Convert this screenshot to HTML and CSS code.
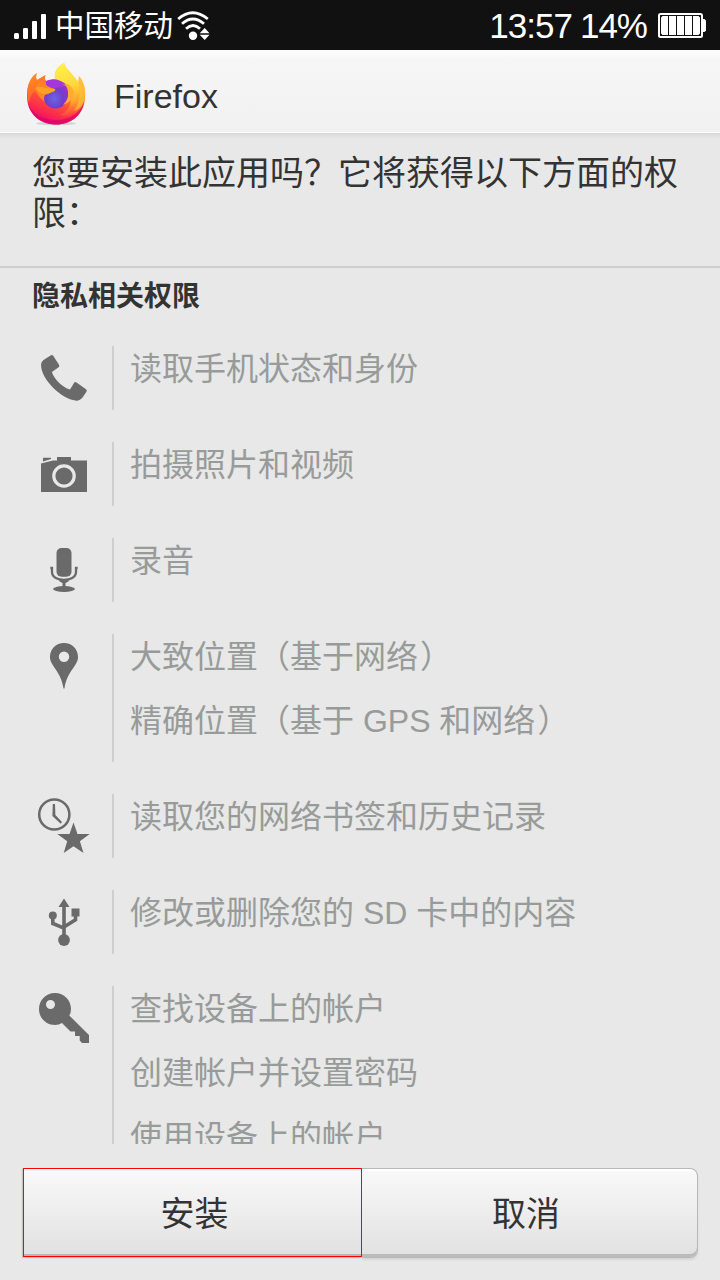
FILE: index.html
```html
<!DOCTYPE html>
<html lang="zh-CN">
<head>
<meta charset="utf-8">
<title>Firefox</title>
<link rel="stylesheet" href="styles.css">
</head>
<body>
<div class="screen">
  <header class="status">
    <svg class="signal" width="34" height="26" viewBox="0 0 34 26" fill="#fff"><rect x="0" y="19" width="5" height="6" rx="1.5"/><rect x="9" y="14" width="5" height="11" rx="1.3"/><rect x="18" y="7" width="5" height="18" rx="1"/><rect x="27" y="0" width="5" height="25" rx="1"/></svg>
    <span class="carrier">中国移动</span>
    <svg class="wifi" width="34" height="30" viewBox="0 0 34 30"><g fill="none" stroke="#fff" stroke-width="2.8"><path d="M1.200 8Q15.500-4.500 30.800 8"/><path d="M5 12.800Q15.800 3.200 27 12.800"/><path d="M9 17.700Q16 11.200 23 17.700"/></g><circle cx="16" cy="24.700" r="4.200" fill="#fff"/><path d="M22.700 22.200 27.700 17l4.800 5.200zM22.700 23.800h9.800L27.700 29z" fill="#fff"/></svg>
    <span class="clock">13:57</span>
    <span class="percent">14%</span>
    <svg class="battery" width="48" height="26" viewBox="0 0 48 26"><rect x="1" y="1" width="43" height="23" rx="1.5" fill="#111" stroke="#fff" stroke-width="2"/><path d="M45 6h1.500l1.500 1.500v10L46.500 19H45z" fill="#fff"/><path d="M4.500 3H10v19H4.500L3 20.500v-16zM11 3h7v19h-7zM19 3h7v19h-7zM27 3h7v19h-7zM35 3h5.500L42 4.500v16L40.500 22H35z" fill="#fff"/></svg>
  </header>

  <div class="titlebar">
    <svg class="logo" width="62" height="64" viewBox="0 0 62 64">
      <defs>
        <linearGradient id="body" x1=".75" y1=".05" x2=".35" y2="1"><stop offset="0" stop-color="#ffdc3c"/><stop offset=".35" stop-color="#ffa02a"/><stop offset=".62" stop-color="#ff5038"/><stop offset=".85" stop-color="#fa2450"/><stop offset="1" stop-color="#e00b70"/></linearGradient>
        <linearGradient id="flame" x1=".4" y1="0" x2=".6" y2="1"><stop offset="0" stop-color="#fff04a"/><stop offset=".45" stop-color="#ffd83c"/><stop offset=".75" stop-color="#ffa32e"/><stop offset="1" stop-color="#ff6a35" stop-opacity="0"/></linearGradient>
        <linearGradient id="ear" x1="0" y1="0" x2=".4" y2="1"><stop offset="0" stop-color="#ff951e"/><stop offset="1" stop-color="#ff5a30"/></linearGradient>
        <radialGradient id="globe" cx=".45" cy=".65" r=".65"><stop offset="0" stop-color="#6668e4"/><stop offset=".55" stop-color="#743cc8"/><stop offset="1" stop-color="#a02fdc"/></radialGradient>
      </defs>
      <ellipse cx="30" cy="60.500" rx="20" ry="1.800" fill="#000" opacity=".12"/>
      <path d="M11 10C10 12 9.500 15 11 17L19.500 12C18.500 15 18.500 17 20 18Q25 17 29 16C28 8 32 3 38 0C40 6 45 9 48 14L53 20L53 13C58 19 60 27 59 35C58 51 46 61.500 30 61.500C13 61.500 1 50 1 33C1 23 4 15 11 10Z" fill="url(#body)"/>
      <path d="M1.500 38C5 51 17 57 30 57C44 57 55 49 58.500 38C56 53 45 61.500 30 61.500C15 61.500 4 52 1.500 38Z" fill="#e0006e" opacity=".75"/>
      <path d="M29 17C28 8 32 3 38 0C40 7 45 10 49 15C57 23 58 31 57 40C54 51 46 55 34 52C45 48 48 37 41 23Q37 18 29 17Z" fill="url(#flame)"/>
      <path d="M52 18 53 13C59 20 60 29 58 38C55 45 51 47 48 48C55 37 55 27 52 18Z" fill="#ffc139" opacity=".7"/>
      <path d="M11 10C10 12 9.500 15 11 17L19.500 12C18.500 15 19 17 21 19Q16 24 18 32L9 28Q4 32 3 40Q0 31 2 23C4 17 6 13 11 10Z" fill="url(#ear)"/>
      <ellipse cx="29.500" cy="31.500" rx="12.800" ry="14" fill="url(#globe)"/>
      <path d="M20 18Q30 13 41 22L36 24Q33 24 31 25L20 26Z" fill="#a537d9"/>
      <path d="M36 22Q43 21 42 30Q43 36 37 42Q46 39 48 31Q48 24 41 21Z" fill="#ffac32"/>
      <path d="M17 18Q20 24 29 26Q30 28 26 29Q23 31 19 32Q17 36 19 39Q12 34 9 26Q11 19 17 18Z" fill="#ff8428"/>
      <path d="M9 25Q14 23 20 25L29 26Q30 28 26 29Q22 31 17 31Q12 29 9 25Z" fill="#ffa125"/>
    </svg>
    <h1 class="app-name">Firefox</h1>
  </div>

  <p class="question">您要安装此应用吗？它将获得以下方面的权限：</p>

  <main class="permissions">
    <h2 class="section-title">隐私相关权限</h2>
    <div class="group">
      <svg class="icon" width="64" height="64" viewBox="0 0 64 64"><path d="M18.500 9.400Q20.200 8.300 21.200 9.700L27 18.700Q28 20.200 26.600 21.300L19.900 26C22 33 30 41 38 43.600L42 37Q43 35.500 44.500 36.500L54 43.200Q55.500 44.400 54.300 46L50.500 51.500Q48 55 43.500 54.600C30 53 9 34 9 18.500Q9 16 11.500 14Z"/></svg>
      <ul class="lines"><li>读取手机状态和身份</li></ul>
    </div>
    <div class="group">
      <svg class="icon" width="64" height="64" viewBox="0 0 64 64"><path d="M11 15.700h8V17l-8 2.500zM25 15h14v3.500h16V50H9V21.500l12-3h4z"/><circle cx="32" cy="34" r="10.200" fill="#6a6a6a" stroke="#e8e8e8" stroke-width="3.200"/></svg>
      <ul class="lines"><li>拍摄照片和视频</li></ul>
    </div>
    <div class="group">
      <svg class="icon" width="64" height="64" viewBox="0 0 64 64"><rect x="24.500" y="10" width="15" height="28.700" rx="5"/><path d="M18.300 30H20v4C20 44.500 44 44.500 44 34v-4h1.700" fill="none" stroke="#6a6a6a" stroke-width="2.300"/><path d="M27.500 42h9v1.500l-3 1.500v5h-3v-5l-3-1.500z"/><ellipse cx="32" cy="51" rx="11" ry="2.900"/></svg>
      <ul class="lines"><li>录音</li></ul>
    </div>
    <div class="group">
      <svg class="icon" width="64" height="64" viewBox="0 0 64 64"><path fill-rule="evenodd" d="M32 9C24 9 18 15 18 23C18 32 29 37 31.500 54.500H32.500C35 37 46 32 46 23C46 15 40 9 32 9ZM32 17.500A5.200 5.200 0 1 1 32 27.900A5.200 5.200 0 1 1 32 17.500Z"/></svg>
      <ul class="lines"><li>大致位置（基于网络<span class="paren">）</span></li><li>精确位置（基于 GPS 和网络<span class="paren">）</span></li></ul>
    </div>
    <div class="group">
      <svg class="icon" width="64" height="64" viewBox="0 0 64 64"><circle cx="22.300" cy="20.500" r="15.100" fill="none" stroke="#6a6a6a" stroke-width="2.500"/><path d="m20.800 10-.4 12 8.300 7.700 1.300-1.600-6.600-7L23 10z"/><path d="m41.500 28.500 4 11.500h12.200l-9.800 7.300L51.500 59l-10-6.800L31.700 59l3.500-11.700-9.900-7.300h12.200z"/></svg>
      <ul class="lines"><li>读取您的网络书签和历史记录</li></ul>
    </div>
    <div class="group">
      <svg class="icon" width="64" height="64" viewBox="0 0 64 64"><path d="m32 8.500 5.500 8.500h-11z"/><path d="M32 14v36M20.800 26v7.500L32 38.200M43.500 22v7.800L32 37" fill="none" stroke="#6a6a6a" stroke-width="3.600"/><circle cx="20.800" cy="25.500" r="4"/><path d="M39.500 18.500h8v8h-8z"/><circle cx="32" cy="50" r="5.900"/></svg>
      <ul class="lines"><li>修改或删除您的 SD 卡中的内容</li></ul>
    </div>
    <div class="group">
      <svg class="icon" width="64" height="64" viewBox="0 0 64 64"><path fill-rule="evenodd" d="M23 7C14 7 7 14 7 23C7 33 15 39 23 39Q27 39 30 37L38.500 45.500H43V50H47.700V54.500L50 57H57V49L37.300 29.500Q39 27 39 23C39 14 32 7 23 7ZM18.500 14A4.500 4.500 0 1 1 18.500 23A4.500 4.500 0 1 1 18.500 14Z"/></svg>
      <ul class="lines"><li>查找设备上的帐户</li><li>创建帐户并设置密码</li><li>使用设备上的帐户</li></ul>
    </div>
  </main>

  <footer class="actions">
    <button class="button install">安装</button>
    <button class="button cancel">取消</button>
  </footer>
</div>
</body>
</html>
```

FILE: styles.css
```css
* { box-sizing: border-box; margin: 0; padding: 0; }

body {
  width: 720px;
  height: 1280px;
  overflow: hidden;
  background: #e8e8e8;
  color: #333;
  font-family: "Liberation Sans", "Noto Sans CJK SC", sans-serif;
}

.screen { display: flex; flex-direction: column; height: 1280px; }

.status {
  display: flex;
  flex: none;
  align-items: center;
  height: 50px;
  padding: 0 14px;
  background: #111;
  color: #fff;
  white-space: nowrap;
}
.signal { flex: none; margin-top: 3px; }
.carrier { margin-left: 7px; padding-top: 1px; font-size: 29.5px; line-height: 50px; }
.wifi { flex: none; margin: 1px auto 0 4px; }
.clock, .percent { font-size: 35px; line-height: 50px; padding-top: 1px; letter-spacing: -1px; }
.clock { margin-left: -2px; }
.percent { margin: 0 11px 0 8px; }
.battery { flex: none; margin-top: 2px; }

.titlebar {
  display: flex;
  flex: none;
  align-items: center;
  height: 83px;
  padding-left: 26px;
  background: linear-gradient(#fdfdfd, #f6f6f6 14%, #f1f1f1);
  border-bottom: 1px solid #fff;
}
.logo { flex: none; margin-top: 8px; }
.app-name { margin: 10px 0 0 25px; padding-left: 1px; font-size: 34px; font-weight: 400; line-height: 40px; }

.question {
  flex: none;
  height: 133px;
  padding: 20px 32px 0;
  background: linear-gradient(#d8d8d8, #e8e8e8 6px);
  font-size: 34px;
  line-height: 40px;
}

.permissions {
  flex: none;
  height: 878px;
  overflow: hidden;
  border-top: 2px solid #cecece;
}
.section-title { height: 62px; padding: 11px 32px 0; font-size: 28px; line-height: 36px; }

.group { display: flex; padding: 16px 32px; }
.icon { flex: none; fill: #6a6a6a; }
.lines {
  flex: 1;
  margin-left: 16px;
  padding-left: 16px;
  border-left: 2px solid #cecece;
  color: #979b99;
  font-size: 32px;
  line-height: 47px;
  list-style: none;
  white-space: nowrap;
}
.lines li { height: 64px; }
.paren { margin-left: 2px; }

.actions {
  display: flex;
  flex: none;
  margin: 24px 22px 0;
  height: 90px;
}
.button {
  flex: none;
  font: inherit;
  font-size: 34px;
  line-height: 40px;
  color: #333;
  padding-top: 2px;
  background: linear-gradient(#f9f9f9, #e1e1e1);
}
.install {
  position: relative;
  z-index: 1;
  width: 339px;
  height: 89px;
  margin-left: 1px;
  padding-left: 4px;
  border: 1px solid #f00;
  box-shadow: -1px 1px 1px #c4c4c4, inset 0 -2px #b8b8b8;
}
.cancel {
  width: 336px;
  height: 90px;
  border: 1px solid #b8b8b8;
  border-left: 0;
  border-radius: 0 8px 8px 0;
  padding-right: 7px;
  box-shadow: inset 0 -3px #bbb, inset 0 2px #fff, 0 2px 2px #d5d5d5;
}
```
